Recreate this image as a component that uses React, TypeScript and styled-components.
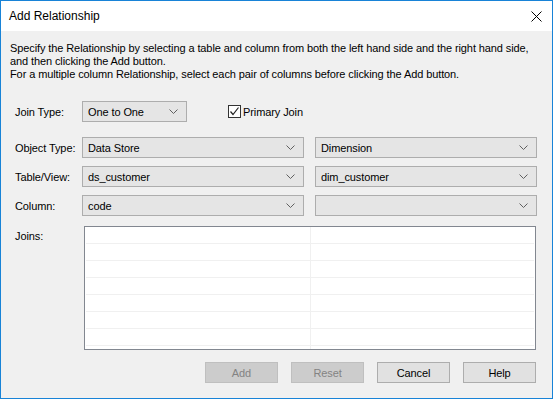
import React from 'react';
import styled, { createGlobalStyle } from 'styled-components';

const Global = createGlobalStyle`
  html, body { margin: 0; padding: 0; background: #ffffff; }
  * { box-sizing: border-box; }
`;

const Window = styled.div`
  width: 553px;
  height: 399px;
  border: 1px solid #1883d7;
  display: flex;
  flex-direction: column;
  font-family: "Liberation Sans", Arial, sans-serif;
  font-size: 11px;
  letter-spacing: -0.1px;
  color: #000;
`;

const TitleBar = styled.div`
  height: 30px;
  flex-shrink: 0;
  background: #fff;
  display: flex;
  align-items: center;
  justify-content: space-between;
  padding: 0 10px 0 8px;
  font-size: 12px;
  letter-spacing: 0;
`;

const Close = styled.div`
  width: 12px;
  height: 12px;
  display: flex;
  align-items: center;
  justify-content: center;
`;

const Body = styled.div`
  flex: 1;
  background: #f0f0f0;
  padding: 11px 15px 0 14px;
  display: flex;
  flex-direction: column;
`;

const Description = styled.p`
  margin: 0 0 0 -5px;
  line-height: 13px;
  white-space: nowrap;
`;

const Row = styled.div<{ $top: number }>`
  display: flex;
  align-items: center;
  height: 21px;
  margin-top: ${p => p.$top}px;
`;

const Label = styled.div`
  width: 67px;
  flex-shrink: 0;
  white-space: nowrap;
`;

const Combo = styled.div<{ $width: number }>`
  width: ${p => p.$width}px;
  height: 21px;
  flex-shrink: 0;
  background: #e5e5e5;
  border: 1px solid #adadad;
  display: flex;
  align-items: center;
  justify-content: space-between;
  padding: 0 8px 0 5px;
`;

const Gap = styled.div<{ $w: number }>`
  width: ${p => p.$w}px;
  flex-shrink: 0;
`;

const CheckLabel = styled.label`
  display: flex;
  align-items: center;
  gap: 2px;
  white-space: nowrap;
`;

const Box = styled.span`
  width: 13px;
  height: 13px;
  border: 1px solid #333;
  background: #fff;
  display: flex;
  align-items: center;
  justify-content: center;
`;

const JoinsRow = styled.div`
  display: flex;
  margin-top: 10px;
`;

const JoinsLabel = styled.div`
  width: 69px;
  flex-shrink: 0;
  padding-top: 4px;
`;

const Grid = styled.div`
  width: 452px;
  height: 124px;
  background: #fff;
  border: 1px solid #828790;
  padding: 0 1px;
  overflow: hidden;
`;

const GridRow = styled.div`
  display: flex;
  height: 17px;
  border-bottom: 1px solid #f0f0f0;
`;

const Cell = styled.div<{ $first?: boolean }>`
  width: ${p => (p.$first ? '225px' : '223px')};
  border-right: ${p => (p.$first ? '1px solid #f0f0f0' : 'none')};
`;

const Buttons = styled.div`
  display: flex;
  justify-content: flex-end;
  gap: 13px;
  margin-top: 12px;
  padding-right: 1px;
`;

const Button = styled.button<{ $disabled?: boolean }>`
  width: 73px;
  height: 21px;
  font: inherit;
  letter-spacing: inherit;
  padding: 0;
  border: 1px solid ${p => (p.$disabled ? '#bfbfbf' : '#adadad')};
  background: ${p => (p.$disabled ? '#cccccc' : '#e1e1e1')};
  color: ${p => (p.$disabled ? '#838383' : '#000')};
`;

const Chevron = () => (
  <svg width="9" height="5" viewBox="0 0 9 5">
    <polyline points="0.5,0.5 4.5,4.5 8.5,0.5" fill="none" stroke="#606060" strokeWidth="1" />
  </svg>
);

const Select: React.FC<{ width: number; value?: string }> = ({ width, value }) => (
  <Combo $width={width}>
    <span>{value}</span>
    <Chevron />
  </Combo>
);

const rows = [
  { label: 'Object Type:', left: 'Data Store', right: 'Dimension', top: 15 },
  { label: 'Table/View:', left: 'ds_customer', right: 'dim_customer', top: 8 },
  { label: 'Column:', left: 'code', right: '', top: 8 },
];

const App: React.FC = () => (
  <>
    <Global />
    <Window>
      <TitleBar>
        <span>Add Relationship</span>
        <Close>
          <svg width="11" height="11" viewBox="0 0 11 11">
            <path d="M0.5 0.5 L10.5 10.5 M10.5 0.5 L0.5 10.5" stroke="#000" strokeWidth="1" />
          </svg>
        </Close>
      </TitleBar>
      <Body>
        <Description>
          Specify the Relationship by selecting a table and column from both the left hand side and the right hand side,
          <br />
          and then clicking the Add button.
          <br />
          For a multiple column Relationship, select each pair of columns before clicking the Add button.
        </Description>
        <Row $top={20}>
          <Label>Join Type:</Label>
          <Select width={105} value="One to One" />
          <Gap $w={41} />
          <CheckLabel>
            <Box>
              <svg width="11" height="11" viewBox="0 0 11 11">
                <polyline points="1.5,5.5 4,8.5 9.5,1.5" fill="none" stroke="#222" strokeWidth="1.2" />
              </svg>
            </Box>
            Primary Join
          </CheckLabel>
        </Row>
        {rows.map(r => (
          <Row key={r.label} $top={r.top}>
            <Label>{r.label}</Label>
            <Select width={222} value={r.left} />
            <Gap $w={11} />
            <Select width={222} value={r.right} />
          </Row>
        ))}
        <JoinsRow>
          <JoinsLabel>Joins:</JoinsLabel>
          <Grid>
            {Array.from({ length: 8 }).map((_, i) => (
              <GridRow key={i}>
                <Cell $first />
                <Cell />
              </GridRow>
            ))}
          </Grid>
        </JoinsRow>
        <Buttons>
          <Button $disabled>Add</Button>
          <Button $disabled>Reset</Button>
          <Button>Cancel</Button>
          <Button>Help</Button>
        </Buttons>
      </Body>
    </Window>
  </>
);

export default App;
